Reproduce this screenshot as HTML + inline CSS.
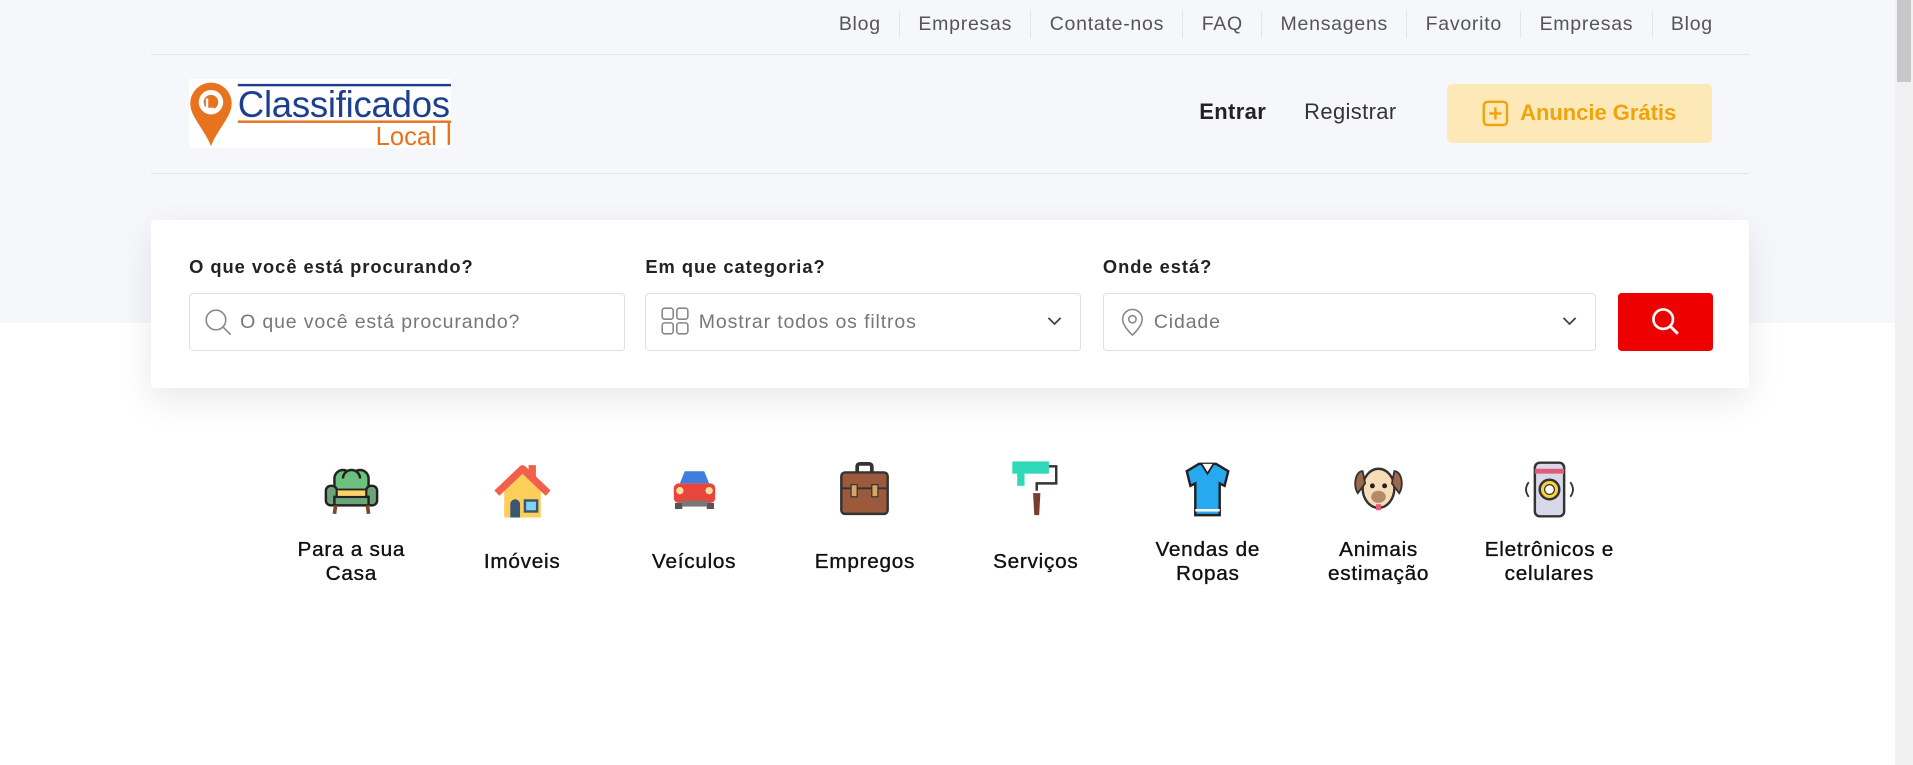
<!DOCTYPE html>
<html><head><meta charset="utf-8">
<style>
*{box-sizing:border-box;margin:0;padding:0}
html,body{width:1913px;height:765px;overflow:hidden;background:#fff}
#z{zoom:1.22;width:1568px;height:627px;position:relative;font-family:"Liberation Sans",sans-serif;color:#222}
.top{position:absolute;left:0;top:0;width:1553px;height:265px;background:#f6f7fb}
.sb{position:absolute;left:1553px;top:0;width:15px;height:627px;background:#f1f1f1}
.sb i{position:absolute;left:2px;top:0;width:11px;height:67px;background:#c8c8c8}
.links{position:absolute;right:164px;top:9px;display:flex;font-size:16px;color:#555;letter-spacing:.6px}
.links span{padding:0 15px;border-left:1px solid #e2e4ea;line-height:22px}
.links span:first-child{border:none}
.links span:last-child{padding-right:0}
.hr{position:absolute;left:124px;width:1310px;height:1px;background:#e2e4ea}
.logo{position:absolute;left:155px;top:65px;width:215px;height:56px;background:#fff}
.nav{position:absolute;top:81px;font-size:18px;letter-spacing:.3px}
.btn{position:absolute;left:1186px;top:69px;width:217px;height:48px;background:#fde8b8;border-radius:4px;color:#f0a30a;font-weight:bold;font-size:18px;display:flex;align-items:center;justify-content:center;gap:9px}
.card{position:absolute;left:124px;top:180px;width:1310px;height:138px;background:#fff;border-radius:3px;box-shadow:0 10px 30px rgba(0,0,0,.09)}
.lab{position:absolute;top:210px;font-size:15px;font-weight:bold;color:#222;letter-spacing:.8px}
.inp{position:absolute;top:240px;height:48px;border:1px solid #dcdfe4;border-radius:3px;background:#fff;font-size:16px;color:#777;display:flex;align-items:center;padding-left:12px;gap:7px;letter-spacing:.7px}
.chev{position:absolute;right:14px;top:16px}
.go{position:absolute;left:1326px;top:240px;width:78px;height:48px;background:#ef0000;border-radius:3px;display:flex;align-items:center;justify-content:center}
.cat{position:absolute;top:376px;width:130px;text-align:center;font-size:17px;color:#111;line-height:20px;letter-spacing:.6px;-webkit-text-stroke:.3px #111}
.cat svg{display:block;margin:0 auto}
.cat .t{height:60px;display:flex;align-items:center;justify-content:center;margin-top:5px}
</style></head><body><div id="z">
<div class="top"></div>
<div class="sb"><i></i></div>
<div class="links"><span>Blog</span><span>Empresas</span><span>Contate-nos</span><span>FAQ</span><span>Mensagens</span><span>Favorito</span><span>Empresas</span><span>Blog</span></div>
<div class="hr" style="top:44px"></div>
<div class="logo">
<svg width="215" height="56" viewBox="0 0 215 56">
<path d="M18 3a17 17 0 0 1 17 17c0 11-11 20-17 35C12 40 1 31 1 20A17 17 0 0 1 18 3z" fill="#e8731f"/>
<circle cx="18" cy="19" r="10" fill="#fff"/><circle cx="18" cy="19" r="6" fill="#e8731f"/>
<text x="13" y="25" font-size="13" font-weight="bold" fill="#fff" font-family="Liberation Sans">L</text>
<rect x="40" y="4" width="175" height="2" fill="#1d3f8f"/>
<text x="40" y="31" font-size="30" fill="#1d3f8f" font-family="Liberation Sans" textLength="174">Classificados</text>
<rect x="40" y="34" width="175" height="2" fill="#e8731f"/>
<text x="153" y="54" font-size="21" fill="#e8731f" font-family="Liberation Sans">Local</text>
<rect x="212" y="36" width="2" height="18" fill="#e8731f"/>
</svg></div>
<div class="nav" style="left:983px;font-weight:bold">Entrar</div>
<div class="nav" style="left:1069px;color:#333">Registrar</div>
<div class="btn"><svg width="22" height="22"><rect x="1.5" y="1.5" width="19" height="19" rx="3" fill="none" stroke="#f0a30a" stroke-width="2"/><path d="M11 6v10M6 11h10" stroke="#f0a30a" stroke-width="2"/></svg>Anuncie Grátis</div>
<div class="hr" style="top:142px"></div>
<div class="card"></div>
<div class="lab" style="left:155px">O que você está procurando?</div>
<div class="lab" style="left:529px">Em que categoria?</div>
<div class="lab" style="left:904px">Onde está?</div>
<div class="inp" style="left:155px;width:357px"><svg width="22" height="22"><circle cx="9" cy="9" r="8" fill="none" stroke="#888" stroke-width="1.3"/><path d="M15 15l6 6" stroke="#888" stroke-width="1.3"/></svg>O que você está procurando?</div>
<div class="inp" style="left:529px;width:357px"><svg width="24" height="24"><g fill="none" stroke="#888" stroke-width="1.3"><rect x="1" y="1" width="9" height="9" rx="2"/><rect x="13" y="1" width="9" height="9" rx="2"/><rect x="1" y="13" width="9" height="9" rx="2"/><rect x="13" y="13" width="9" height="9" rx="2"/></g></svg>Mostrar todos os filtros<svg class="chev" width="14" height="14"><path d="M2 4l5 5 5-5" fill="none" stroke="#444" stroke-width="1.5"/></svg></div>
<div class="inp" style="left:904px;width:404px"><svg width="22" height="24"><path d="M11 2a8 8 0 0 1 8 8c0 6-8 13-8 13S3 16 3 10a8 8 0 0 1 8-8z" fill="none" stroke="#888" stroke-width="1.3"/><circle cx="11" cy="10" r="3" fill="none" stroke="#888" stroke-width="1.3"/></svg>Cidade<svg class="chev" width="14" height="14"><path d="M2 4l5 5 5-5" fill="none" stroke="#444" stroke-width="1.5"/></svg></div>
<div class="go"><svg width="24" height="24"><circle cx="10" cy="10" r="8" fill="none" stroke="#fff" stroke-width="2.2"/><path d="M16 16l6 6" stroke="#fff" stroke-width="2.4"/></svg></div>

<div class="cat" style="left:223px"><svg width="50" height="50" viewBox="0 0 50 50"><g stroke="#222" stroke-width="2" fill="#6cc17f"><path d="M11 28V16a7 7 0 0 1 14 0 7 7 0 0 1 14 0v12z"/><path d="M18 16a7 7 0 0 1 14 0"/><rect x="4" y="22" width="9" height="16" rx="4" fill="#6aa57a"/><rect x="37" y="22" width="9" height="16" rx="4" fill="#6aa57a"/><rect x="11" y="31" width="28" height="7" fill="#6aa57a"/><rect x="13" y="25" width="24" height="6" fill="#fcd46a" stroke-width="1.5"/></g><path d="M12 38l-1 7M38 38l1 7" stroke="#7a4a2a" stroke-width="3"/></svg><div class="t">Para a sua<br>Casa</div></div>
<div class="cat" style="left:363px"><svg width="50" height="50" viewBox="0 0 50 50"><rect x="30" y="5" width="6" height="10" fill="#f25f4c"/><path d="M10 26v22h30V26L25 12z" fill="#fccf5a"/><path d="M4 28L25 8l21 20" fill="none" stroke="#f25f4c" stroke-width="6" stroke-linejoin="round"/><path d="M15 48V37a4 4 0 0 1 8 0v11z" fill="#3c5570"/><rect x="27" y="34" width="10" height="9" fill="#7fd4f6" stroke="#3c5570" stroke-width="2"/></svg><div class="t">Imóveis</div></div>
<div class="cat" style="left:504px"><svg width="50" height="50" viewBox="0 0 50 50"><path d="M13 20l4-10h16l4 10z" fill="#3e7fdd"/><rect x="8" y="20" width="34" height="16" rx="4" fill="#e8453c"/><rect x="15" y="34" width="20" height="5" fill="#777"/><circle cx="13" cy="26" r="3" fill="#fde0a0"/><circle cx="37" cy="26" r="3" fill="#fde0a0"/><rect x="9" y="36" width="6" height="5" fill="#555"/><rect x="35" y="36" width="6" height="5" fill="#555"/></svg><div class="t">Veículos</div></div>
<div class="cat" style="left:644px"><svg width="50" height="50" viewBox="0 0 50 50"><rect x="19" y="4" width="12" height="8" rx="2" fill="none" stroke="#333" stroke-width="3"/><rect x="6" y="11" width="38" height="34" rx="3" fill="#9c5a3c" stroke="#333" stroke-width="2"/><path d="M6 24h38" stroke="#333" stroke-width="1.5"/><rect x="14" y="21" width="5" height="10" fill="#d9a46a" stroke="#333"/><rect x="31" y="21" width="5" height="10" fill="#d9a46a" stroke="#333"/></svg><div class="t">Empregos</div></div>
<div class="cat" style="left:784px"><svg width="50" height="50" viewBox="0 0 50 50"><rect x="6" y="2" width="30" height="10" fill="#2fd9b7"/><path d="M10 10v12h6V10" fill="#2fd9b7"/><path d="M36 6h6v14H26v6" fill="none" stroke="#333" stroke-width="2"/><path d="M23 28h6l-1 18h-4z" fill="#7a3c2c"/></svg><div class="t">Serviços</div></div>
<div class="cat" style="left:925px"><svg width="50" height="50" viewBox="0 0 50 50"><path d="M18 4h14l10 6-3 12-4-2v26H15V20l-4 2-3-12z" fill="#26a9ee" stroke="#222" stroke-width="2"/><path d="M20 4l5 8 5-8" fill="#fff" stroke="#222" stroke-width="1.5"/><path d="M15 42h20" stroke="#fff" stroke-width="2"/></svg><div class="t">Vendas de<br>Ropas</div></div>
<div class="cat" style="left:1065px"><svg width="50" height="50" viewBox="0 0 50 50"><ellipse cx="25" cy="24" rx="13" ry="16" fill="#f7ddb7" stroke="#333" stroke-width="2"/><path d="M12 10c-6 0-8 12-4 18l6-8zM38 10c6 0 8 12 4 18l-6-8z" fill="#9c6a4a" stroke="#333" stroke-width="1.5"/><circle cx="20" cy="22" r="2" fill="#222"/><circle cx="30" cy="22" r="2" fill="#222"/><ellipse cx="25" cy="31" rx="6" ry="5" fill="#b48a6a"/><path d="M23 37h4v5h-4z" fill="#e8587a"/></svg><div class="t">Animais<br>estimação</div></div>
<div class="cat" style="left:1205px"><svg width="50" height="50" viewBox="0 0 50 50"><rect x="13" y="3" width="24" height="44" rx="4" fill="#d8d8e8" stroke="#333" stroke-width="2"/><rect x="13" y="8" width="24" height="4" fill="#e05a7a"/><circle cx="25" cy="25" r="8" fill="#fcd23a" stroke="#333" stroke-width="2"/><circle cx="25" cy="25" r="4" fill="#fff" stroke="#333"/><path d="M8 19c-3 4-3 8 0 12M42 19c3 4 3 8 0 12" fill="none" stroke="#333" stroke-width="1.5"/></svg><div class="t">Eletrônicos e<br>celulares</div></div>
</div></body></html>
